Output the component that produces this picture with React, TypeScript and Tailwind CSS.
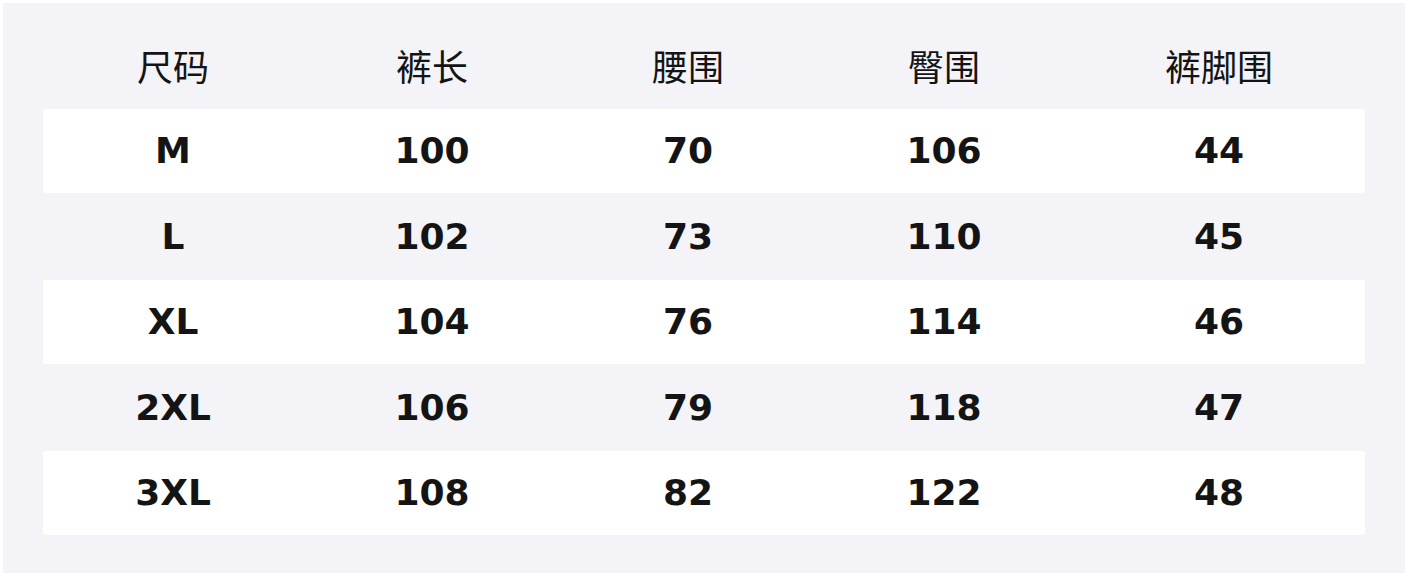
const headers = ["尺码", "裤长", "腰围", "臀围", "裤脚围"];

const rows = [
  ["M", "100", "70", "106", "44"],
  ["L", "102", "73", "110", "45"],
  ["XL", "104", "76", "114", "46"],
  ["2XL", "106", "79", "118", "47"],
  ["3XL", "108", "82", "122", "48"],
];

const cols = "grid grid-cols-[260px_258px_254px_258px_1fr]";

export default function App() {
  return (
    <div className="h-[578px] w-[1408px] bg-white p-[3px] font-['DejaVu_Sans','Noto_Sans_CJK_SC',sans-serif] text-[#141414]">
      <div className="h-[570px] w-[1402px] bg-[#f3f3f8] px-[40px] pt-[30px]">
        <div className={`${cols} h-[76px] items-center pb-[8px] text-[36px] font-normal`}>
          {headers.map((h) => (
            <div key={h} className="text-center leading-none">
              <span className="font-['Noto_Sans_CJK_SC',sans-serif]">{h}</span>
            </div>
          ))}
        </div>
        {rows.map((r, i) => (
          <div
            key={r[0]}
            className={`${cols} items-center text-[36px] font-bold ${
              i % 2 === 0 ? "mb-[1.5px] h-[84px] rounded-[3px] bg-white" : "h-[85.5px]"
            }`}
          >
            {r.map((c, j) => (
              <div key={j} className="text-center leading-none">
                {c}
              </div>
            ))}
          </div>
        ))}
      </div>
    </div>
  );
}
